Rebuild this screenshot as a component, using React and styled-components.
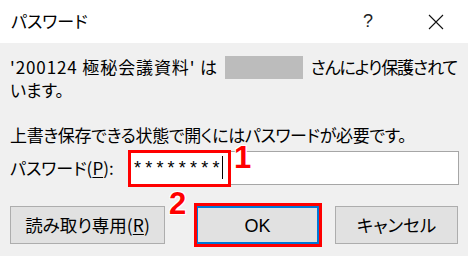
import React from "react";
import styled, { createGlobalStyle } from "styled-components";

const GlobalStyle = createGlobalStyle`
  html, body {
    margin: 0;
    padding: 0;
    background: #f0f0f0;
  }
  body {
    font-family: "Noto Sans CJK JP", "Noto Sans", sans-serif;
    color: #000;
  }
`;

const Dialog = styled.div`
  width: 468px;
  height: 256px;
  background: #f0f0f0;
  overflow: hidden;
  font-feature-settings: "palt";
`;

const TitleBar = styled.div`
  height: 43px;
  background: #ffffff;
  display: flex;
  align-items: center;
  padding-left: 11px;
`;

const Title = styled.div`
  flex: 1;
  font-size: 17px;
  line-height: 20px;
  margin-top: -1px;
`;

const Help = styled.div`
  width: 20px;
  margin-right: 50px;
  font-family: "Liberation Sans", sans-serif;
  font-size: 18px;
  color: #222;
  text-align: center;
`;

const CloseBox = styled.div`
  width: 16px;
  height: 16px;
  margin-right: 24px;
  display: flex;
`;

const Body = styled.div`
  padding: 13px 9px 0 10px;
  font-size: 17px;
`;

const Message = styled.div`
  line-height: 21px;
  white-space: nowrap;
`;

const Spaced = styled.span`
  letter-spacing: ${(p) => p.$ls}px;
`;

const Owner = styled.span`
  display: inline-block;
  width: 78px;
  height: 23px;
  background: #bcbcbc;
  vertical-align: middle;
  margin: -4px 4px 0 3px;
`;

const Note = styled.div`
  margin-top: 24px;
  line-height: 21px;
  white-space: nowrap;
  letter-spacing: -0.35px;
`;

const PasswordRow = styled.div`
  margin-top: 6px;
  display: flex;
  align-items: center;
`;

const Label = styled.label`
  width: 120px;
  line-height: 21px;
  u {
    text-decoration: underline;
    text-underline-offset: 2px;
  }
`;

const InputBox = styled.div`
  position: relative;
  flex: 1;
  height: 34px;
  box-sizing: border-box;
  background: #fff;
  border: 1px solid #a6a6a6;
  display: flex;
  align-items: center;
  padding-left: 3px;
`;

const Stars = styled.span`
  font-family: "Liberation Sans", sans-serif;
  font-size: 18px;
  letter-spacing: 4.2px;
  margin-top: 2px;
`;

const Caret = styled.span`
  width: 1px;
  height: 23px;
  background: #000;
  margin-left: -2px;
`;

const Highlight = styled.div`
  position: absolute;
  left: -3px;
  top: -2px;
  width: 103px;
  height: 37px;
  box-sizing: border-box;
  border: 3px solid #ff0000;
  pointer-events: none;
`;

const Marker = styled.span`
  position: absolute;
  font-family: "Liberation Sans", sans-serif;
  font-weight: bold;
  font-size: 31px;
  line-height: 22px;
  color: #ff0000;
  text-shadow: -1px -1px 0 #fff, 1px -1px 0 #fff, -1px 1px 0 #fff, 1px 1px 0 #fff;
  left: ${(p) => p.$left}px;
  top: ${(p) => p.$top}px;
`;

const ButtonRow = styled.div`
  margin-top: 21px;
  display: flex;
`;

const Button = styled.button`
  position: relative;
  width: ${(p) => p.$width}px;
  height: 38px;
  margin-left: ${(p) => p.$gap || 0}px;
  box-sizing: border-box;
  background: #e1e1e1;
  border: ${(p) => (p.$primary ? "2px solid #0078d7" : "1px solid #adadad")};
  font-family: "Noto Sans CJK JP", "Noto Sans", sans-serif;
  font-feature-settings: "palt";
  font-size: 17.5px;
  color: #000;
  padding: 0;
  u {
    text-underline-offset: 2px;
  }
`;

const OkText = styled.span`
  font-family: "Liberation Sans", sans-serif;
  font-size: 18px;
`;

const ButtonFrame = styled.span`
  position: absolute;
  left: -4px;
  right: -5px;
  top: -5px;
  bottom: -5px;
  border: 3px solid #ff0000;
`;

export default function App() {
  return (
    <>
      <GlobalStyle />
      <Dialog>
        <TitleBar>
          <Title>パスワード</Title>
          <Help>?</Help>
          <CloseBox>
            <svg width="16" height="16" viewBox="0 0 16 16">
              <path d="M1 1 L15 15 M15 1 L1 15" stroke="#111" strokeWidth="1.1" fill="none" />
            </svg>
          </CloseBox>
        </TitleBar>
        <Body>
          <Message>
            <Spaced $ls={0.9}>'200124 極秘会議資料' は</Spaced> <Owner />{" "}
            <Spaced $ls={-1.1}>さんにより保護されて</Spaced>
            <br />
            います。
          </Message>
          <Note>上書き保存できる状態で開くにはパスワードが必要です。</Note>
          <PasswordRow>
            <Label>
              パスワード(<u>P</u>):
            </Label>
            <InputBox>
              <Stars>********</Stars>
              <Caret />
              <Highlight />
              <Marker $left={103} $top={-5}>1</Marker>
            </InputBox>
          </PasswordRow>
          <ButtonRow>
            <Button $width={155}>
              読み取り専用(<u>R</u>)
            </Button>
            <Button $width={123} $gap={31} $primary>
              <OkText>OK</OkText>
              <ButtonFrame />
              <Marker $left={-29} $top={-15}>2</Marker>
            </Button>
            <Button $width={123} $gap={16}>
              キャンセル
            </Button>
          </ButtonRow>
        </Body>
      </Dialog>
    </>
  );
}
